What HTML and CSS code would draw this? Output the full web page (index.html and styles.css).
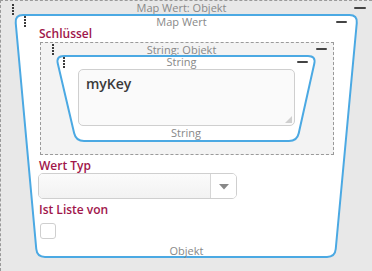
FILE: index.html
```html
<!DOCTYPE html>
<html lang="de">
<head>
<meta charset="utf-8">
<title>Map Wert</title>
<link rel="stylesheet" href="styles.css">
</head>
<body>
<div class="outer">
  <div class="head h-outer">
    <span class="dots"><i></i><i></i><i></i><i></i></span>
    <span class="title">Map Wert: Objekt</span>
    <span class="minus minus-lg"></span>
  </div>
  <div class="shape-block mapwert">
    <svg class="shape" width="345" height="244" viewBox="0 0 345 244">
      <path d="M9 1 L335.5 1 Q343.5 1 342.76 8.97 L321.74 235.03 Q321 243 313 243 L31 243 Q23 243 22.28 235.03 L1.72 8.97 Q1 1 9 1 Z"/>
    </svg>
    <div class="head h-map">
      <span class="dots"><i></i><i></i><i></i><i></i></span>
      <span class="title">Map Wert</span>
      <span class="minus"></span>
    </div>
    <div class="content">
      <div class="label">Schlüssel</div>
      <div class="dashed">
        <div class="head h-dashed">
          <span class="dots"><i></i><i></i><i></i><i></i></span>
          <span class="title">String: Objekt</span>
          <span class="minus"></span>
        </div>
        <div class="shape-block string">
          <svg class="shape" width="262" height="87" viewBox="0 0 262 87">
            <path d="M9 1 L253 1 Q261 1 259.26 8.81 L243.74 78.19 Q242 86 234 86 L29 86 Q21 86 19.17 78.21 L2.83 8.79 Q1 1 9 1 Z"/>
          </svg>
          <div class="head h-string">
            <span class="dots"><i></i><i></i><i></i><i></i></span>
            <span class="title">String</span>
            <span class="minus"></span>
          </div>
          <div class="textarea">myKey<svg class="grip" width="7" height="7" viewBox="0 0 7 7"><path d="M7 0 L7 7 L0 7 Z"/></svg></div>
          <div class="foot">String</div>
        </div>
      </div>
      <div class="label label-gap">Wert Typ</div>
      <div class="select">
        <div class="select-value"></div>
        <div class="select-arrow"><svg width="10" height="6" viewBox="0 0 10 6"><path d="M0 0 L10 0 L5 5.5 Z"/></svg></div>
      </div>
      <div class="label label-gap">Ist Liste von</div>
      <div class="checkbox"></div>
      <div class="foot foot-obj">Objekt</div>
    </div>
  </div>
</div>
</body>
</html>
```
FILE: styles.css
```css
html, body {
  margin: 0;
  padding: 0;
  background: #e8e8e8;
  overflow: hidden;
}
body {
  font-family: "Open Sans", "Noto Sans", sans-serif;
  width: 372px;
  height: 271px;
}
.outer {
  box-sizing: border-box;
  width: 372px;
  height: 271px;
  border: 1px dashed #9a9a9a;
  border-right: none;
  border-bottom: none;
  background: #e8e8e8;
}
.head {
  display: grid;
  align-items: center;
  font-size: 11px;
  color: #888;
}
.title {
  text-align: center;
  white-space: nowrap;
  line-height: 12px;
}
.dots {
  display: flex;
  flex-direction: column;
  gap: 1px;
  align-self: start;
}
.dots i {
  display: block;
  width: 2px;
  height: 2px;
  background: #3a3a3a;
}
.minus {
  display: block;
  width: 11px;
  height: 2px;
  border-radius: 1px;
  background: #444;
}
.minus-lg { width: 12px; }

.h-outer {
  height: 13px;
  grid-template-columns: 20px 1fr 30px;
}
.h-outer .dots { margin: 3px 0 0 11px; }
.h-outer .minus { margin-left: 12px; }

.shape-block {
  position: relative;
}
.shape {
  position: absolute;
  left: 0;
  top: 0;
}
.shape path {
  fill: #fff;
  stroke: #4ba9e3;
  stroke-width: 2;
}
.head, .content, .textarea, .foot { position: relative; }

.mapwert {
  margin-left: 13px;
  width: 345px;
  height: 244px;
}
.h-map {
  padding-top: 2px;
  height: 12px;
  grid-template-columns: 20px 1fr 30px;
}
.h-map .dots { margin-left: 10px; }
.h-map .minus { margin-left: 7px; }

.content {
  padding-left: 25px;
}
.label {
  font-size: 12px;
  font-weight: 600;
  line-height: 12px;
  color: #a0164b;
  white-space: nowrap;
}
.label-gap { margin-top: 5px; }

.dashed {
  box-sizing: border-box;
  margin: 2px 0 0 1px;
  width: 294px;
  border: 1px dashed #9a9a9a;
  background: #f3f3f3;
  padding-bottom: 12px;
}
.h-dashed {
  height: 12px;
  grid-template-columns: 20px 1fr 31px;
}
.h-dashed .title { line-height: 11px; }
.h-dashed .dots { margin: 1px 0 0 11px; }
.h-dashed .minus { margin-left: 14px; }

.string {
  margin-left: 14px;
  width: 262px;
  height: 87px;
}
.h-string {
  padding-top: 1px;
  height: 12px;
  grid-template-columns: 20px 1fr 29px;
}
.h-string .dots { margin: 1px 0 0 8px; }
.h-string .minus { margin-left: 9px; }

.textarea {
  box-sizing: border-box;
  margin: 1px 0 0 23px;
  width: 217px;
  height: 57px;
  border: 1px solid #cfcfcf;
  border-radius: 5px;
  background: #fafafa;
  padding: 4px 0 0 7px;
  font-size: 14px;
  font-weight: 600;
  line-height: 19px;
  color: #3a3a3a;
}
.grip {
  position: absolute;
  right: 2px;
  bottom: 2px;
}
.grip path { fill: #cfcfcf; }

.foot {
  font-size: 11px;
  line-height: 14px;
  color: #888;
  text-align: center;
}

.select {
  box-sizing: border-box;
  display: flex;
  margin: 1px 0 0 -1px;
  width: 199px;
  height: 26px;
  border: 1px solid #cfcfcf;
  border-radius: 5px;
  overflow: hidden;
}
.select-value {
  flex: 1;
  background: linear-gradient(#fbfbfb, #f2f2f2);
  border-right: 1px solid #d6d6d6;
}
.select-arrow {
  width: 25px;
  display: flex;
  align-items: center;
  justify-content: center;
  background: #fff;
  padding-top: 2px;
  box-sizing: border-box;
}
.select-arrow path { fill: #888; }

.checkbox {
  box-sizing: border-box;
  margin: 7px 0 0 1px;
  width: 16px;
  height: 16px;
  border: 1px solid #cfcfcf;
  border-radius: 3px;
  background: #fff;
}
.foot-obj {
  margin: 5px 0 0 -25px;
}
```
